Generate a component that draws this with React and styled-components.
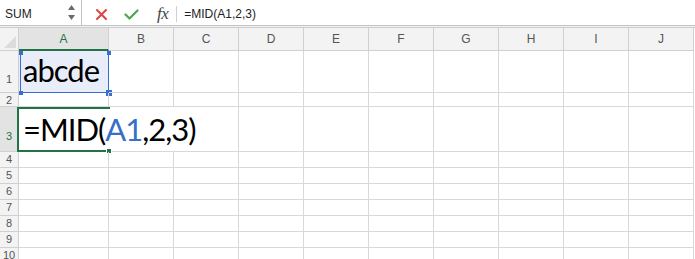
import React from 'react'
import styled, { createGlobalStyle, css } from 'styled-components'

const GREEN = '#217346'
const BLUE = '#3570d0'
const LINE = '#d8d8d8'
const HEAD_LINE = '#d0d0d0'

const Global = createGlobalStyle`
  *, *::before, *::after { box-sizing: border-box; }
  body {
    margin: 0;
    background: #fff;
    font-family: 'Liberation Sans', Arial, sans-serif;
    overflow: hidden;
  }
`

const Sheet = styled.div`
  width: 695px;
`

const FormulaBar = styled.div`
  display: flex;
  height: 26px;
  border-bottom: 1px solid #c4c4c4;
  background: #fff;
`

const BarGap = styled.div`
  height: 2px;
  background: #f1f1f1;
  border-bottom: 1px solid #cdcdcd;
`

const NameBox = styled.div`
  width: 82px;
  display: flex;
  align-items: center;
  justify-content: space-between;
  padding: 3px 6px 0 5px;
  border-right: 1px solid #c4c4c4;
  font-size: 12px;
  color: #222;
`

const Spinner = styled.div`
  display: flex;
  flex-direction: column;
  align-items: center;
  gap: 5px;
  margin-top: -3px;
`

const Tools = styled.div`
  display: flex;
  align-items: center;
  padding: 3px 0 0 14px;
`

const Tool = styled.div`
  display: flex;
  align-items: center;
  margin-right: ${p => p.$gap}px;
`

const Fx = styled.span`
  font-family: 'Liberation Serif', 'Times New Roman', serif;
  font-style: italic;
  font-size: 17px;
  color: #444;
  letter-spacing: -0.5px;
`

const Divider = styled.div`
  width: 1px;
  height: 16px;
  background: #cfcfcf;
  margin-right: 7px;
`

const FormulaText = styled.div`
  font-size: 12px;
  color: #222;
`

const Grid = styled.div`
  display: grid;
  grid-template-columns: 19px 90px repeat(9, 65px) 1fr;
  grid-template-rows: 23px 42px 14px 45px repeat(7, 16px);
`

const headBase = css`
  background: #f3f3f3;
  border-right: 1px solid ${HEAD_LINE};
  border-bottom: 1px solid ${HEAD_LINE};
  color: #555;
`

const Corner = styled.div`
  ${headBase};
  display: flex;
  align-items: flex-end;
  justify-content: flex-end;
  padding: 0 2px 2px 0;
`

const ColHead = styled.div`
  ${headBase};
  display: flex;
  align-items: center;
  justify-content: center;
  font-size: 12px;
  ${p => p.$active && css`
    background: #e3e3e3;
    color: ${GREEN};
    border-bottom: 2px solid ${GREEN};
  `}
`

const RowHead = styled.div`
  ${headBase};
  display: flex;
  align-items: flex-end;
  justify-content: center;
  font-size: 11px;
  padding-bottom: ${p => p.$pad}px;
  overflow: hidden;
  ${p => p.$active && css`
    background: #e3e3e3;
    color: ${GREEN};
  `}
`

const Cell = styled.div`
  position: relative;
  display: flex;
  align-items: flex-end;
  border-right: 1px solid ${LINE};
  border-bottom: 1px solid ${LINE};
  padding: 0 0 6px 4px;
  white-space: nowrap;
  grid-column: span ${p => p.$span || 1};
  ${p => p.$range && css`background: #e8edf9;`}
`

const Value = styled.span`
  position: relative;
  z-index: 1;
  font-family: Lato, 'Liberation Sans', sans-serif;
  font-size: 31px;
  letter-spacing: -1px;
  line-height: 1;
  color: #000;
`

const Ref = styled.span`
  color: #3a6fc8;
`

const RangeBox = styled.div`
  position: absolute;
  top: 0;
  left: 1px;
  right: -1px;
  bottom: -1px;
  border: 1px solid ${BLUE};
  border-top: none;
`

const ActiveBox = styled.div`
  position: absolute;
  top: 0;
  left: -2px;
  width: 93px;
  bottom: -1px;
  border-top: 2px solid ${GREEN};
  border-left: 2px solid ${GREEN};
  border-bottom: 2px solid ${GREEN};
`

const handlePos = {
  tl: css`top: 0; left: -2px;`,
  tr: css`top: 0; right: -3px;`,
  bl: css`bottom: -3px; left: -2px;`,
  br: css`bottom: -4px; right: -4px; width: 6px; height: 6px;`,
}

const Handle = styled.div`
  position: absolute;
  width: 4px;
  height: 4px;
  background: ${p => p.$color};
  ${p => handlePos[p.$at]};
`

const FillHandle = styled.div`
  position: absolute;
  left: 87px;
  bottom: -3px;
  width: 6px;
  height: 5px;
  background: ${GREEN};
  border: 1px solid #fff;
  border-bottom: none;
`

const columns = ['A', 'B', 'C', 'D', 'E', 'F', 'G', 'H', 'I', 'J']

const rows = [
  { n: 1, pad: 7 },
  { n: 2, pad: 0 },
  { n: 3, pad: 9 },
  { n: 4, pad: 2 },
  { n: 5, pad: 2 },
  { n: 6, pad: 2 },
  { n: 7, pad: 2 },
  { n: 8, pad: 2 },
  { n: 9, pad: 2 },
  { n: 10, pad: 2 },
]

const Cross = () => (
  <svg width='11' height='11' viewBox='0 0 11 11'>
    <path d='M1 1L10 10M10 1L1 10' stroke='#e0443e' strokeWidth='2' strokeLinecap='round' />
  </svg>
)

const Check = () => (
  <svg width='15' height='11' viewBox='0 0 15 11'>
    <path d='M1.5 5.5L5.5 9.5L13.5 1.5' fill='none' stroke='#4da64f' strokeWidth='2.2' strokeLinecap='round' strokeLinejoin='round' />
  </svg>
)

const Arrow = ({ down }) => (
  <svg width='7' height='5' viewBox='0 0 7 5'>
    <path d={down ? 'M0 0H7L3.5 5Z' : 'M0 5H7L3.5 0Z'} fill='#6b6b6b' />
  </svg>
)

const renderCells = (n) => {
  if (n === 1) {
    return [
      <Cell key='A' $range>
        <Value>abcde</Value>
        <RangeBox>
          <Handle $color={BLUE} $at='tl' />
          <Handle $color={BLUE} $at='tr' />
          <Handle $color={BLUE} $at='bl' />
          <Handle $color={BLUE} $at='br' />
        </RangeBox>
      </Cell>,
      ...columns.slice(1).map(c => <Cell key={c} />),
    ]
  }
  if (n === 3) {
    return [
      <Cell key='A' $span={3}>
        <ActiveBox>
          <FillHandle />
        </ActiveBox>
        <Value>=MID(<Ref>A1</Ref>,2,3)</Value>
      </Cell>,
      ...columns.slice(3).map(c => <Cell key={c} />),
    ]
  }
  return columns.map(c => <Cell key={c} />)
}

const App = () => (
  <Sheet>
    <Global />
    <FormulaBar>
      <NameBox>
        <span>SUM</span>
        <Spinner>
          <Arrow />
          <Arrow down />
        </Spinner>
      </NameBox>
      <Tools>
        <Tool $gap={17}><Cross /></Tool>
        <Tool $gap={18}><Check /></Tool>
        <Tool $gap={8}><Fx>fx</Fx></Tool>
        <Divider />
        <FormulaText>=MID(A1,2,3)</FormulaText>
      </Tools>
    </FormulaBar>
    <BarGap />
    <Grid>
      <Corner>
        <svg width='12' height='12' viewBox='0 0 12 12'>
          <path d='M12 0V12H0Z' fill='#dcdcdc' />
        </svg>
      </Corner>
      {columns.map(c => (
        <ColHead key={c} $active={c === 'A'}>{c}</ColHead>
      ))}
      <div />
      {rows.map(r => (
        <React.Fragment key={r.n}>
          <RowHead $pad={r.pad} $active={r.n === 3}>{r.n}</RowHead>
          {renderCells(r.n)}
          <div />
        </React.Fragment>
      ))}
    </Grid>
  </Sheet>
)

export default App
